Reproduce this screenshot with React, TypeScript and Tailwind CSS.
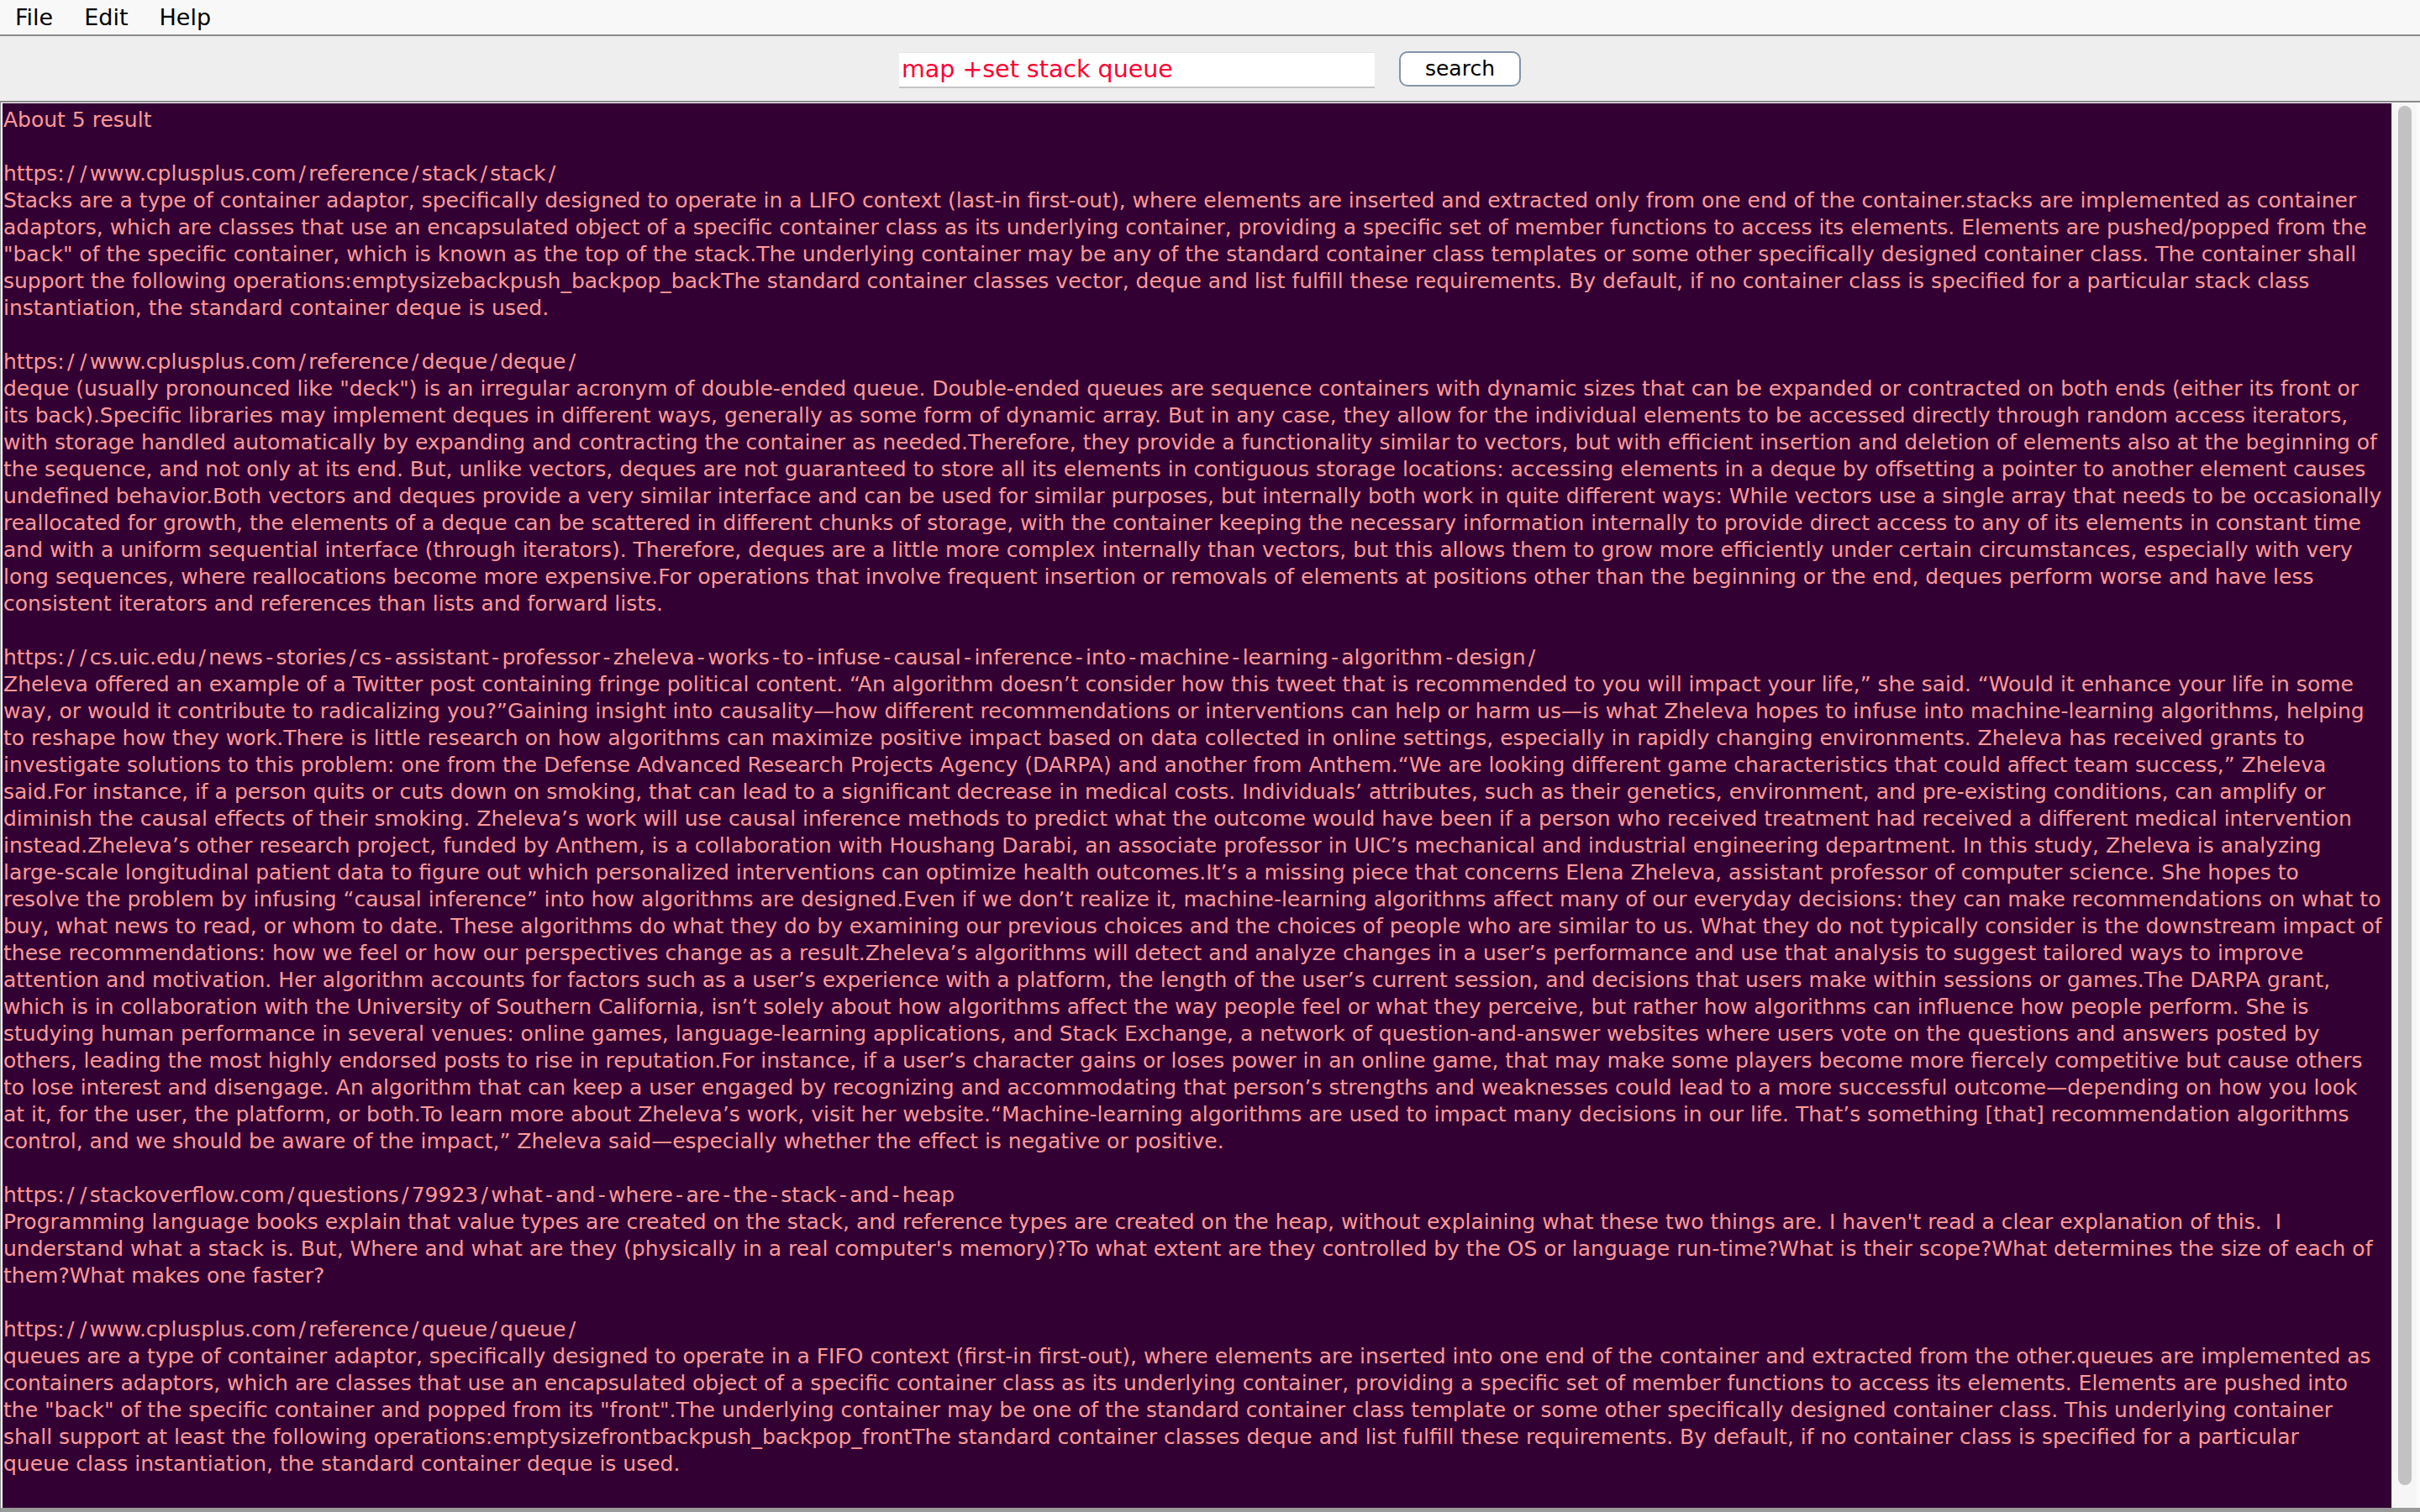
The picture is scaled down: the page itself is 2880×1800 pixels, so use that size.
import React from "react";

const lines: string[] = [
  "About 5 result",
  "",
  "https://www.cplusplus.com/reference/stack/stack/",
  "Stacks are a type of container adaptor, specifically designed to operate in a LIFO context (last-in first-out), where elements are inserted and extracted only from one end of the container.stacks are implemented as container",
  "adaptors, which are classes that use an encapsulated object of a specific container class as its underlying container, providing a specific set of member functions to access its elements. Elements are pushed/popped from the",
  "\"back\" of the specific container, which is known as the top of the stack.The underlying container may be any of the standard container class templates or some other specifically designed container class. The container shall",
  "support the following operations:emptysizebackpush_backpop_backThe standard container classes vector, deque and list fulfill these requirements. By default, if no container class is specified for a particular stack class",
  "instantiation, the standard container deque is used.",
  "",
  "https://www.cplusplus.com/reference/deque/deque/",
  "deque (usually pronounced like \"deck\") is an irregular acronym of double-ended queue. Double-ended queues are sequence containers with dynamic sizes that can be expanded or contracted on both ends (either its front or",
  "its back).Specific libraries may implement deques in different ways, generally as some form of dynamic array. But in any case, they allow for the individual elements to be accessed directly through random access iterators,",
  "with storage handled automatically by expanding and contracting the container as needed.Therefore, they provide a functionality similar to vectors, but with efficient insertion and deletion of elements also at the beginning of",
  "the sequence, and not only at its end. But, unlike vectors, deques are not guaranteed to store all its elements in contiguous storage locations: accessing elements in a deque by offsetting a pointer to another element causes",
  "undefined behavior.Both vectors and deques provide a very similar interface and can be used for similar purposes, but internally both work in quite different ways: While vectors use a single array that needs to be occasionally",
  "reallocated for growth, the elements of a deque can be scattered in different chunks of storage, with the container keeping the necessary information internally to provide direct access to any of its elements in constant time",
  "and with a uniform sequential interface (through iterators). Therefore, deques are a little more complex internally than vectors, but this allows them to grow more efficiently under certain circumstances, especially with very",
  "long sequences, where reallocations become more expensive.For operations that involve frequent insertion or removals of elements at positions other than the beginning or the end, deques perform worse and have less",
  "consistent iterators and references than lists and forward lists.",
  "",
  "https://cs.uic.edu/news-stories/cs-assistant-professor-zheleva-works-to-infuse-causal-inference-into-machine-learning-algorithm-design/",
  "Zheleva offered an example of a Twitter post containing fringe political content. \u201cAn algorithm doesn\u2019t consider how this tweet that is recommended to you will impact your life,\u201d she said. \u201cWould it enhance your life in some",
  "way, or would it contribute to radicalizing you?\u201dGaining insight into causality\u2014how different recommendations or interventions can help or harm us\u2014is what Zheleva hopes to infuse into machine-learning algorithms, helping",
  "to reshape how they work.There is little research on how algorithms can maximize positive impact based on data collected in online settings, especially in rapidly changing environments. Zheleva has received grants to",
  "investigate solutions to this problem: one from the Defense Advanced Research Projects Agency (DARPA) and another from Anthem.\u201cWe are looking different game characteristics that could affect team success,\u201d Zheleva",
  "said.For instance, if a person quits or cuts down on smoking, that can lead to a significant decrease in medical costs. Individuals\u2019 attributes, such as their genetics, environment, and pre-existing conditions, can amplify or",
  "diminish the causal effects of their smoking. Zheleva\u2019s work will use causal inference methods to predict what the outcome would have been if a person who received treatment had received a different medical intervention",
  "instead.Zheleva\u2019s other research project, funded by Anthem, is a collaboration with Houshang Darabi, an associate professor in UIC\u2019s mechanical and industrial engineering department. In this study, Zheleva is analyzing",
  "large-scale longitudinal patient data to figure out which personalized interventions can optimize health outcomes.It\u2019s a missing piece that concerns Elena Zheleva, assistant professor of computer science. She hopes to",
  "resolve the problem by infusing \u201ccausal inference\u201d into how algorithms are designed.Even if we don\u2019t realize it, machine-learning algorithms affect many of our everyday decisions: they can make recommendations on what to",
  "buy, what news to read, or whom to date. These algorithms do what they do by examining our previous choices and the choices of people who are similar to us. What they do not typically consider is the downstream impact of",
  "these recommendations: how we feel or how our perspectives change as a result.Zheleva\u2019s algorithms will detect and analyze changes in a user\u2019s performance and use that analysis to suggest tailored ways to improve",
  "attention and motivation. Her algorithm accounts for factors such as a user\u2019s experience with a platform, the length of the user\u2019s current session, and decisions that users make within sessions or games.The DARPA grant,",
  "which is in collaboration with the University of Southern California, isn\u2019t solely about how algorithms affect the way people feel or what they perceive, but rather how algorithms can influence how people perform. She is",
  "studying human performance in several venues: online games, language-learning applications, and Stack Exchange, a network of question-and-answer websites where users vote on the questions and answers posted by",
  "others, leading the most highly endorsed posts to rise in reputation.For instance, if a user\u2019s character gains or loses power in an online game, that may make some players become more fiercely competitive but cause others",
  "to lose interest and disengage. An algorithm that can keep a user engaged by recognizing and accommodating that person\u2019s strengths and weaknesses could lead to a more successful outcome\u2014depending on how you look",
  "at it, for the user, the platform, or both.To learn more about Zheleva\u2019s work, visit her website.\u201cMachine-learning algorithms are used to impact many decisions in our life. That\u2019s something [that] recommendation algorithms",
  "control, and we should be aware of the impact,\u201d Zheleva said\u2014especially whether the effect is negative or positive.",
  "",
  "https://stackoverflow.com/questions/79923/what-and-where-are-the-stack-and-heap",
  "Programming language books explain that value types are created on the stack, and reference types are created on the heap, without explaining what these two things are. I haven't read a clear explanation of this.  I",
  "understand what a stack is. But, Where and what are they (physically in a real computer's memory)?To what extent are they controlled by the OS or language run-time?What is their scope?What determines the size of each of",
  "them?What makes one faster?",
  "",
  "https://www.cplusplus.com/reference/queue/queue/",
  "queues are a type of container adaptor, specifically designed to operate in a FIFO context (first-in first-out), where elements are inserted into one end of the container and extracted from the other.queues are implemented as",
  "containers adaptors, which are classes that use an encapsulated object of a specific container class as its underlying container, providing a specific set of member functions to access its elements. Elements are pushed into",
  "the \"back\" of the specific container and popped from its \"front\".The underlying container may be one of the standard container class template or some other specifically designed container class. This underlying container",
  "shall support at least the following operations:emptysizefrontbackpush_backpop_frontThe standard container classes deque and list fulfill these requirements. By default, if no container class is specified for a particular",
  "queue class instantiation, the standard container deque is used.",
];

// the original font draws "/" and "-" much wider, so pad them a little in links
function UrlLine({ text }: { text: string }) {
  const parts = text.split(/([/-])/);
  return (
    <>
      {parts.map((p, i) =>
        p === "/" || p === "-" ? (
          <span key={i} className="mx-[3.3px]">
            {p}
          </span>
        ) : (
          <React.Fragment key={i}>{p}</React.Fragment>
        )
      )}
    </>
  );
}

export default function App() {
  return (
    <div className="h-screen w-full flex flex-col overflow-hidden bg-[#eeeeee] font-['DejaVu_Sans',sans-serif]">
      {/* menu bar */}
      <div className="h-[43px] shrink-0 bg-[#f8f8f8] border-b-2 border-[#8a8a8a] flex items-center pt-[2px] text-[27px] text-black">
        <span className="ml-[18px]">File</span>
        <span className="ml-[37px]">Edit</span>
        <span className="ml-[37px]">Help</span>
      </div>

      {/* search bar */}
      <div className="h-[79px] shrink-0 flex items-center justify-center gap-[29px] border-b-2 border-[#8a8a8a]">
        <div className="w-[566px] h-[43px] mt-[4px] bg-white border-t border-[#e4e4e4] border-b-2 border-b-[#c4c4c4] flex items-center pl-[3px] text-[28.5px] text-[#ff0033]">
          map +set stack queue
        </div>
        <button className="w-[145px] h-[42px] bg-white border-2 border-[#8494aa] rounded-[10px] text-[25px] text-black leading-none">
          search
        </button>
      </div>

      {/* results */}
      <div className="flex-1 min-h-0 flex border-l border-[#8a8a8a] border-b-[5px] border-b-[#9a9a9a]">
        <div className="flex-1 min-w-0 overflow-hidden bg-[#330033] border-l-2 border-t border-white pt-[4px] pl-[1px] text-[25px] text-[#ff9999]">
          {lines.map((l, i) => (
            <div key={i} className="h-[32px] leading-[32px] whitespace-pre">
              {l.startsWith("https://") ? <UrlLine text={l} /> : l}
            </div>
          ))}
        </div>
        <div className="w-[34px] shrink-0 bg-[#f6f6f6] border-l border-[#e8e8e8] border-r-[4px] border-r-[#fbfbfb] pt-[4px] pb-[27px] pl-[7px]">
          <div className="w-[16px] h-full rounded-full bg-[#c2c2c2]" />
        </div>
      </div>
    </div>
  );
}
